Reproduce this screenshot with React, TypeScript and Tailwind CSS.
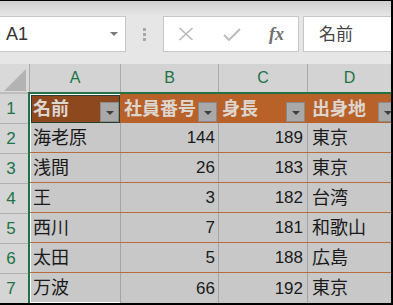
import React from "react";

const rows: [string, string, string, string][] = [
  ["海老原", "144", "189", "東京"],
  ["浅間", "26", "183", "東京"],
  ["王", "3", "182", "台湾"],
  ["西川", "7", "181", "和歌山"],
  ["太田", "5", "188", "広島"],
  ["万波", "66", "192", "東京"],
];

function FilterBtn({ cls = "" }: { cls?: string }) {
  return (
    <div
      className={`w-[19px] h-[20px] shrink-0 bg-[#a9a9a9] border border-[#8a8a8a] flex items-center justify-center ${cls}`}
    >
      <div className="w-0 h-0 mt-[2px] border-l-[4px] border-r-[4px] border-t-[4px] border-l-transparent border-r-transparent border-t-[#3f3f3f]" />
    </div>
  );
}

export default function App() {
  return (
    <div className="w-[393px] h-[305px] overflow-hidden bg-[#e6e6e6] border-t border-r-2 border-b-2 border-black flex flex-col font-['Liberation_Sans','Noto_Sans_CJK_JP',sans-serif]">
      {/* top strip */}
      <div className="h-[15px] shrink-0 bg-linear-to-b from-[#cfcfcf] to-[#e7e7e7]" />
      {/* formula bar */}
      <div className="h-[36px] shrink-0 flex">
        <div className="w-[126px] h-full bg-white border border-l-0 border-[#c6c6c6] flex items-center justify-between pl-[6px] pr-[7px]">
          <span className="text-[18px] leading-none text-[#333]">A1</span>
          <div className="w-0 h-0 border-l-[4px] border-r-[4px] border-t-[4px] border-l-transparent border-r-transparent border-t-[#7a7a7a]" />
        </div>
        <div className="w-[37px] h-full flex flex-col items-center justify-center gap-[2px]">
          <div className="w-[3px] h-[3px] bg-[#a8a8a8]" />
          <div className="w-[3px] h-[3px] bg-[#a8a8a8]" />
          <div className="w-[3px] h-[3px] bg-[#a8a8a8]" />
        </div>
        <div className="w-[136px] h-full bg-white border border-[#c6c6c6] flex items-center pl-[14px]">
          <svg width="16" height="14" viewBox="0 0 16 14" className="shrink-0">
            <path d="M1.5 1 L14.5 13 M14.5 1 L1.5 13" stroke="#b9b9b9" strokeWidth="1.6" fill="none" />
          </svg>
          <svg width="18" height="13" viewBox="0 0 18 13" className="shrink-0 ml-[29px]">
            <path d="M1 7 L6 12 L17 1" stroke="#b9b9b9" strokeWidth="1.8" fill="none" />
          </svg>
          <span className="ml-[28px] text-[18px] leading-none italic font-bold text-[#6e6e6e] font-['Liberation_Serif',serif]">
            fx
          </span>
        </div>
        <div className="w-[4px]" />
        <div className="flex-1 h-full bg-white border border-r-0 border-[#c6c6c6] flex items-center pl-[15px]">
          <span className="text-[17px] leading-none text-[#444]">名前</span>
        </div>
      </div>
      <div className="h-[12px] shrink-0" />
      {/* column headers */}
      <div className="h-[28px] shrink-0 flex bg-[#d3d3d3] text-[16px] text-[#217346]">
        <div className="w-[29px] h-full bg-[#d9d9d9] flex items-end justify-end pr-[3px] pb-[1px]">
          <svg width="22" height="22" viewBox="0 0 22 22">
            <polygon points="22,0 22,22 0,22" fill="#b3b3b3" />
          </svg>
        </div>
        <div className="w-[91px] h-full border-l border-[#ababab] flex items-center justify-center">A</div>
        <div className="w-[98px] h-full border-l border-[#ababab] flex items-center justify-center">B</div>
        <div className="w-[89px] h-full border-l border-[#ababab] flex items-center justify-center">C</div>
        <div className="flex-1 h-full border-l border-[#ababab] flex items-center justify-center">D</div>
      </div>
      <div className="h-[2px] shrink-0 flex">
        <div className="w-[28px] bg-[#bdbdbd]" />
        <div className="flex-1 bg-[#217346]" />
      </div>
      {/* body */}
      <div className="flex-1 flex">
        <div className="w-[28px] flex flex-col bg-[#d5d5d5] text-[17px] text-[#217346]">
          <div className="h-[29px] border-b border-[#b0b0b0] flex items-center justify-center w-[22px] box-content pr-[6px]">
            <span className="w-[22px] text-center">1</span>
          </div>
          {[2, 3, 4, 5, 6, 7].map((n) => (
            <div key={n} className="h-[30px] border-b border-[#b0b0b0] flex items-center">
              <span className="w-[22px] text-center">{n}</span>
            </div>
          ))}
        </div>
        <div className="w-[2px] bg-[#217346]" />
        <div className="flex-1 flex flex-col bg-[#c8c8c8]">
          {/* header row */}
          <div className="h-[29px] flex bg-[#b8622a] text-[18px] font-bold text-[#dcd6d1] leading-none">
            <div className="w-[90px] h-full border-l border-t border-white">
              <div className="h-full border border-[#27402c] bg-[#8d491d] flex items-center justify-between pl-[1px]">
                <span>名前</span>
                <FilterBtn cls="mt-[5px] mr-[0px]" />
              </div>
            </div>
            <div className="w-[98px] h-full flex items-center justify-between pl-[4px]">
              <span>社員番号</span>
              <FilterBtn cls="mt-[6px] mr-[1px]" />
            </div>
            <div className="w-[89px] h-full flex items-center justify-between pl-[4px]">
              <span>身長</span>
              <FilterBtn cls="mt-[6px] mr-[2px]" />
            </div>
            <div className="flex-1 h-full flex items-center justify-between pl-[5px] overflow-hidden">
              <span>出身地</span>
              <FilterBtn cls="mt-[6px] -mr-[6px]" />
            </div>
          </div>
          {rows.map((r, i) => {
            const last = i === rows.length - 1;
            return (
              <div
                key={i}
                className={`h-[30px] flex ${last ? "" : "border-b border-[#b86c3c]"} text-[#1a1a1a] leading-none`}
              >
                <div
                  className={`w-[90px] h-full border-l border-white flex items-center pl-[2px] text-[18px] ${last ? "border-b" : ""}`}
                >
                  {r[0]}
                </div>
                <div className="w-[98px] h-full border-l border-[#a3a3a3] flex items-center justify-end pr-[3px] text-[17px]">
                  {r[1]}
                </div>
                <div className="w-[89px] h-full border-l border-[#a3a3a3] flex items-center justify-end pr-[4px] text-[17px]">
                  {r[2]}
                </div>
                <div className="flex-1 h-full border-l border-[#a3a3a3] flex items-center pl-[4px] text-[18px]">
                  {r[3]}
                </div>
              </div>
            );
          })}
        </div>
      </div>
    </div>
  );
}
